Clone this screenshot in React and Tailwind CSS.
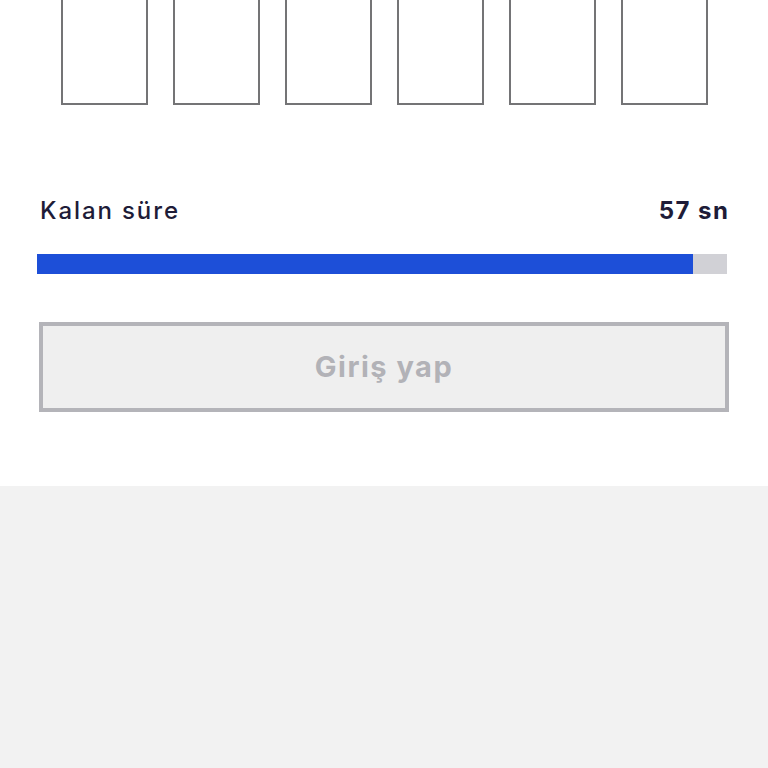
export default function App() {
  const kalan = 57;
  const toplam = 60;
  const oran = (kalan / toplam) * 100;

  return (
    <div className="min-h-screen bg-[#f2f2f2] font-['Inter','Liberation_Sans',sans-serif]">
      {/* Kod kutuları ve giriş */}
      <div className="bg-white pb-[74px] overflow-hidden">
        <div className="flex justify-center gap-[25px] -mt-[18px]">
          {[0, 1, 2, 3, 4, 5].map((i) => (
            <div key={i} className="w-[87px] h-[123px] border-2 border-[#747476] bg-white" />
          ))}
        </div>

        <div className="flex justify-between items-center px-10 mt-[92px] leading-[28px]">
          <span className="text-[24px] font-medium tracking-[1.9px] text-[#1e1c38]">Kalan süre</span>
          <span className="text-[24px] font-bold tracking-[1.5px] text-[#1e1c38] -mr-[1.5px]">{kalan} sn</span>
        </div>

        <div className="mx-[37px] w-[690px] h-[20px] bg-[#d1d1d6] mt-[29px]">
          <div className="h-full bg-[#1d4fd8]" style={{ width: `${oran}%` }} />
        </div>

        <div className="px-[39px] mt-[48px]">
          <button
            disabled
            className="w-full h-[90px] border-4 border-[#b4b4b9] bg-[#efefef] text-[29px] font-bold tracking-[1.5px] text-[#b2b2b7]"
          >
            Giriş yap
          </button>
        </div>
      </div>
    </div>
  );
}
